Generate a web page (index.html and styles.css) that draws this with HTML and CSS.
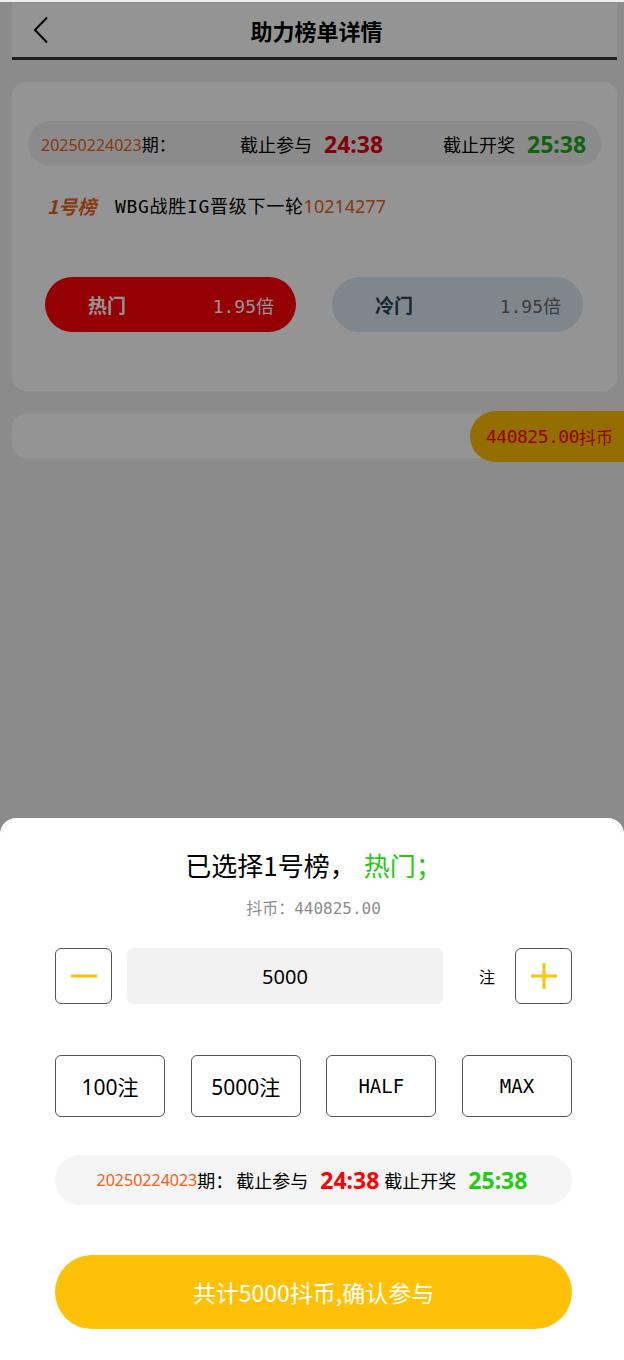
FILE: index.html
```html
<!DOCTYPE html>
<html lang="zh">
<head>
<meta charset="utf-8">
<title>助力榜单详情</title>
<link rel="stylesheet" href="styles.css">
</head>
<body>
<div class="page">
  <header class="header">
    <svg class="back" width="16" height="28" viewBox="0 0 16 28"><path d="M14 1.5 L2 14 L14 26.5" fill="none" stroke="#000" stroke-width="2"/></svg>
    <h1 class="title">助力榜单详情</h1>
  </header>

  <section class="card">
    <div class="period">
      <div class="p-issue"><span class="orange">20250224023</span>期：</div>
      <div class="p-join">截止参与<b class="red">24:38</b></div>
      <div class="p-draw">截止开奖<b class="green">25:38</b></div>
    </div>
    <div class="board-row">
      <span class="board-no">1号榜</span>
      <span class="board-desc">WBG战胜IG晋级下一轮<span class="orange">10214277</span></span>
    </div>
    <div class="choices">
      <div class="choice hot"><b>热门</b><span>1.95倍</span></div>
      <div class="choice cold"><b>冷门</b><span>1.95倍</span></div>
    </div>
  </section>

  <section class="bar">
    <div class="balance">440825.00<small>抖币</small></div>
  </section>
</div>

<div class="overlay"></div>

<div class="sheet">
  <div class="sheet-title">已选择1号榜，<span class="green2 pick">热门；</span></div>
  <div class="sheet-coin">抖币：440825.00</div>
  <div class="stepper">
    <div class="step-btn"><svg width="28" height="28" viewBox="0 0 28 28"><path d="M1 14 H27" stroke="#fec108" stroke-width="3"/></svg></div>
    <div class="amount">5000</div>
    <div class="unit">注</div>
    <div class="step-btn"><svg width="28" height="28" viewBox="0 0 28 28"><path d="M1 14 H27 M14 1 V27" stroke="#fec108" stroke-width="3"/></svg></div>
  </div>
  <div class="quick">
    <div class="q-btn">100注</div>
    <div class="q-btn">5000注</div>
    <div class="q-btn mono">HALF</div>
    <div class="q-btn mono">MAX</div>
  </div>
  <div class="period2">
    <span class="orange2">20250224023</span><span>期：</span><span class="join2">截止参与</span><b class="red2">24:38</b><span>截止开奖</span><b class="green2">25:38</b>
  </div>
  <div class="confirm">共计5000抖币,确认参与</div>
</div>
</body>
</html>
```

FILE: styles.css
```css
* { box-sizing: border-box; }

body {
  margin: 0;
  background: #f0f0f0;
  font-family: "DejaVu Sans Mono", "Noto Sans CJK SC", monospace;
  color: #000;
  height: 1360px;
  overflow: hidden;
}

.page {
  padding: 3px 7px 0 12px;
}

.header {
  position: relative;
  height: 57px;
  background: #fff;
  border-bottom: 3px solid #333;
  display: flex;
  align-items: center;
  justify-content: center;
}

.back {
  position: absolute;
  left: 21px;
  top: 13px;
}

.title {
  margin: 0;
  font-family: "Noto Sans CJK SC", sans-serif;
  font-size: 22px;
  font-weight: 700;
  line-height: 30px;
  padding-left: 4px;
}

.card {
  margin-top: 22px;
  height: 309px;
  background: #fff;
  border-radius: 14px;
  padding: 39px 16px 0;
}

.period {
  height: 45px;
  border-radius: 22px;
  background: #f0f0f0;
  display: flex;
  align-items: center;
  padding-left: 13px;
  font-size: 18px;
  font-family: "Noto Sans CJK SC", sans-serif;
}

.p-issue { width: 199px; font-size: 17px; }
.p-join { width: 203px; display: flex; align-items: center; }
.p-draw { flex: 1; display: flex; align-items: center; }

.period b {
  font-family: "Noto Sans", sans-serif;
  font-size: 23px;
  font-weight: 700;
  margin-left: 12px;
}

.orange { color: #e8621c; font-family: "Noto Sans", sans-serif; }
.p-issue .orange { font-size: 16px; }
.red { color: #e00014; }
.green { color: #1ea81e; }

.board-row {
  margin-top: 27px;
  height: 24px;
  display: flex;
  align-items: center;
  padding-left: 19px;
  font-size: 18px;
}

.board-no {
  font-family: "Noto Sans CJK SC", sans-serif;
  font-size: 19px;
  font-weight: 700;
  font-style: italic;
  color: #e8621c;
  width: 68px;
}

.board-desc {
  font-family: "DejaVu Sans Mono", "Noto Sans CJK SC", monospace;
  font-size: 18px;
  letter-spacing: 0.7px;
}

.board-desc .orange {
  font-family: "Noto Sans", sans-serif;
  font-size: 18px;
  letter-spacing: 0;
}

.choices {
  margin-top: 60px;
  padding: 0 18px 0 17px;
  display: flex;
  justify-content: space-between;
}

.choice {
  width: 251px;
  height: 55px;
  border-radius: 28px;
  display: flex;
  align-items: center;
  justify-content: space-between;
  padding: 0 22px 0 43px;
  font-size: 18px;
}

.choice b {
  font-family: "Noto Sans CJK SC", sans-serif;
  font-size: 19px;
  font-weight: 700;
}

.hot { background: #ff0008; color: #fff; }
.cold { background: #dce8f2; color: #666; }
.cold b { color: #2c4052; }

.bar {
  position: relative;
  margin-top: 23px;
  height: 44px;
  background: #fff;
  border-radius: 14px;
}

.balance {
  position: absolute;
  right: -7px;
  top: -3px;
  width: 154px;
  height: 51px;
  border-radius: 26px 0 0 26px;
  background: #ffbe00;
  color: #ff0008;
  display: flex;
  align-items: center;
  padding-left: 16px;
  font-size: 18px;
  font-family: "DejaVu Sans Mono", monospace;
  letter-spacing: -0.5px;
}

.balance small {
  font-family: "Noto Sans CJK SC", sans-serif;
  font-size: 17px;
  letter-spacing: 0;
}

.overlay {
  position: fixed;
  left: 0;
  right: 0;
  top: 2px;
  bottom: 0;
  background: rgba(0, 0, 0, 0.42);
}

.sheet {
  position: fixed;
  left: 0;
  right: 0;
  bottom: 0;
  height: 542px;
  background: #fff;
  border-radius: 16px 16px 0 0;
  padding: 30px 52px 0 55px;
  display: flex;
  flex-direction: column;
}

.sheet-title {
  height: 34px;
  line-height: 34px;
  text-align: center;
  font-family: "Noto Sans CJK SC", sans-serif;
  font-size: 26px;
}

.pick { margin-left: 8px; }

.green2 { color: #22cc11; }

.sheet-coin {
  margin-top: 16px;
  height: 22px;
  line-height: 22px;
  text-align: center;
  color: #8c8c8c;
  font-size: 16px;
}

.stepper {
  margin-top: 28px;
  height: 56px;
  display: flex;
  align-items: center;
}

.step-btn {
  width: 57px;
  height: 56px;
  border: 1.5px solid #555;
  border-radius: 6px;
  display: flex;
  align-items: center;
  justify-content: center;
}

.amount {
  margin-left: 15px;
  width: 316px;
  height: 56px;
  background: #f2f2f2;
  border-radius: 6px;
  display: flex;
  align-items: center;
  justify-content: center;
  font-family: "Noto Sans", sans-serif;
  font-size: 20px;
}

.unit {
  flex: 1;
  text-align: center;
  padding-left: 16px;
  font-family: "Noto Sans CJK SC", sans-serif;
  font-size: 16px;
}

.quick {
  margin-top: 51px;
  display: flex;
  justify-content: space-between;
}

.q-btn {
  width: 110px;
  height: 62px;
  border: 1.5px solid #555;
  border-radius: 6px;
  display: flex;
  align-items: center;
  justify-content: center;
  font-family: "Noto Sans", "Noto Sans CJK SC", sans-serif;
  font-size: 21px;
}

.q-btn.mono {
  font-family: "DejaVu Sans Mono", monospace;
  font-size: 19px;
}

.period2 {
  margin-top: 38px;
  height: 50px;
  border-radius: 25px;
  background: #f5f5f5;
  display: flex;
  align-items: center;
  justify-content: center;
  padding-right: 3px;
  font-family: "Noto Sans CJK SC", sans-serif;
  font-size: 18px;
}

.orange2 { color: #ff5a14; font-family: "Noto Sans", sans-serif; font-size: 16px; }

.join2 { margin-left: 3px; }

.period2 b {
  font-family: "Noto Sans", sans-serif;
  font-size: 23px;
  font-weight: 700;
  margin: 0 5px 0 12px;
}

.period2 b:last-child { margin-right: 0; }

.red2 { color: #ff0000; }

.confirm {
  margin-top: 50px;
  height: 74px;
  border-radius: 37px;
  background: #fec108;
  color: #fff;
  display: flex;
  align-items: center;
  justify-content: center;
  font-family: "Noto Sans CJK SC", sans-serif;
  font-size: 23px;
  font-weight: 400;
}
```
